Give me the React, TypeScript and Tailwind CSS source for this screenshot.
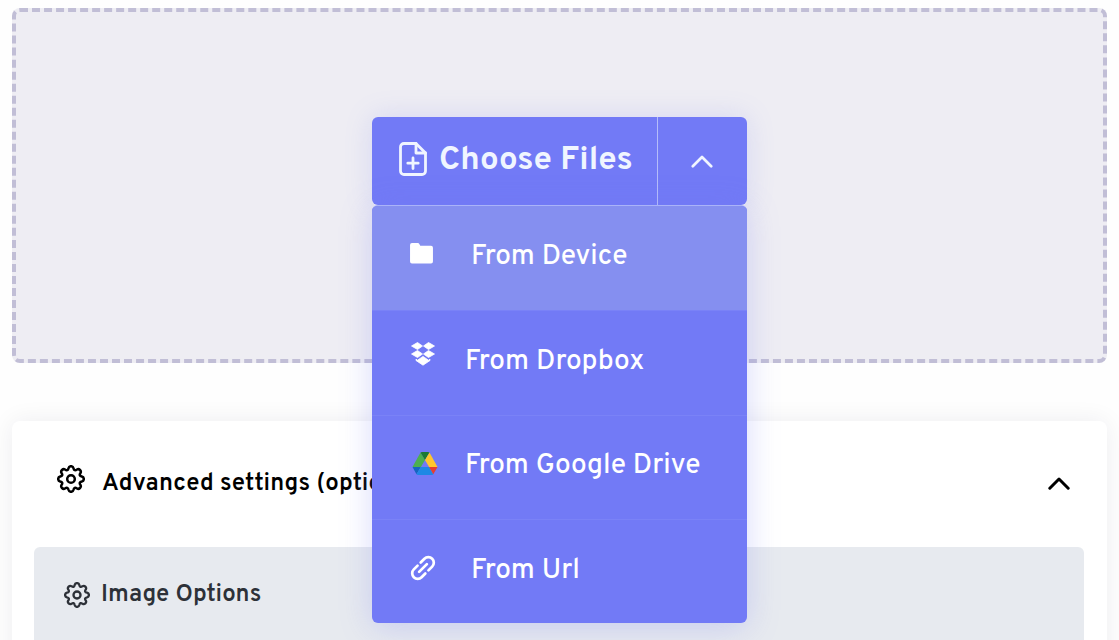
import { useState } from "react";
import { twMerge } from "tailwind-merge";

type IconProps = { className?: string };

const GearIcon: React.FC<IconProps> = ({ className }) => (
  <svg
    viewBox="0 0 28 28"
    className={className}
    fill="none"
    stroke="currentColor"
    strokeWidth="2.5"
    strokeLinejoin="round"
  >
    <path d="M11.5 3.2Q12 1.2 14 1.2T16.5 3.2Q17.2 6.5 20 4.5Q21.6 3.6 23 5T23.5 8Q21.5 10.8 24.8 11.5Q26.8 12 26.8 14T24.8 16.5Q21.5 17.2 23.5 20Q24.4 21.6 23 23T20 23.5Q17.2 21.5 16.5 24.8Q16 26.8 14 26.8T11.5 24.8Q10.8 21.5 8 23.5Q6.4 24.4 5 23T4.5 20Q6.5 17.2 3.2 16.5Q1.2 16 1.2 14T3.2 11.5Q6.5 10.8 4.5 8Q3.6 6.4 5 5T8 4.5Q10.8 6.5 11.5 3.2Z" />
    <circle cx="14" cy="14" r="3.8" />
  </svg>
);

const ChevronIcon: React.FC<IconProps> = ({ className }) => (
  <svg
    viewBox="0 0 22 13"
    className={className}
    fill="none"
    stroke="currentColor"
    strokeLinecap="round"
    strokeLinejoin="round"
  >
    <path d="M1.8 11.2 11 2l9.2 9.2" />
  </svg>
);

const FilePlusIcon: React.FC<IconProps> = ({ className }) => (
  <svg
    viewBox="0 0 28 34"
    className={className}
    fill="none"
    stroke="currentColor"
    strokeWidth="2.8"
    strokeLinecap="round"
    strokeLinejoin="round"
  >
    <path d="M17 1.5H5A3.5 3.5 0 0 0 1.5 5v24A3.5 3.5 0 0 0 5 32.5h18a3.5 3.5 0 0 0 3.5-3.5V11z" />
    <path d="M17 1.5V11h9.5M14 16v10.5M8.8 21.2h10.4" />
  </svg>
);

const FolderIcon: React.FC<IconProps> = ({ className }) => (
  <svg viewBox="0 0 24 22" className={className} fill="currentColor">
    <path d="M2 0h6.2Q9.2 0 9.7 1L10.7 3H22a2 2 0 0 1 2 2v14.5a2 2 0 0 1-2 2H2a2 2 0 0 1-2-2V2a2 2 0 0 1 2-2z" />
  </svg>
);

const DropboxIcon: React.FC<IconProps> = ({ className }) => (
  <svg
    viewBox="0 0 24 24"
    className={className}
    fill="currentColor"
    stroke="currentColor"
    strokeWidth="0.8"
  >
    <path d="M6.5.5 11.5 4 6.5 7.5.5 4zM17.5.5 23.5 4l-6 3.5-5-3.5zM6.5 8.5l5 3.5-5 3.5-6-3.5zM17.5 8.5l6 3.5-6 3.5-5-3.5zM5 17.2l1.5 1 5.5-3.8 5.5 3.8 1.5-1v1.3L12 23.2l-7-4.7z" />
  </svg>
);

const DriveIcon: React.FC<IconProps> = ({ className }) => (
  <svg viewBox="0 0 26 23" className={className}>
    <path fill="#4caf50" d="M8.5.5 13 8 8.9 15H.5z" />
    <path fill="#1b7a33" d="M8.5.5Q9 0 10 0h6q1 0 1.5.5L13 8z" />
    <path fill="#ffc62e" d="M17.5.5 25.5 15h-8.4L13 8z" />
    <path fill="#1565c0" d="M.5 15h8.4L4.5 22.3z" />
    <path fill="#1e88e5" d="M8.900 15h8.200l4.200 7.300Q20.800 23 20 23H6q-1 0-1.500-.7z" />
    <path fill="#e53e30" d="M17.100 15h8.400l-4.200 7.300z" />
  </svg>
);

const LinkIcon: React.FC<IconProps> = ({ className }) => (
  <svg
    viewBox="0 0 32 32"
    className={className}
    fill="none"
    stroke="currentColor"
    strokeWidth="2.7"
    strokeLinecap="round"
  >
    <path d="M13.8 21.5H8.5a5.5 5.5 0 0 1 0-11h5.3M18.2 10.5h5.3a5.5 5.5 0 0 1 0 11h-5.3M10.5 16h11" />
  </svg>
);

const sources = [
  {
    label: "From Device",
    icon: <FolderIcon className="h-[21px] w-[23px]" />,
    iconClass: "pl-[38px] pb-[10px]",
    textClass: "pl-[9px] tracking-[0.05px]",
  },
  {
    label: "From Dropbox",
    icon: <DropboxIcon className="size-6" />,
    iconClass: "pl-[39px] pb-[18px]",
    textClass: "pl-[3px] tracking-[0.1px]",
  },
  {
    label: "From Google Drive",
    icon: <DriveIcon className="h-[23px] w-[26px]" />,
    iconClass: "pl-10 pb-2",
    textClass: "pl-[3px] tracking-[0.05px]",
  },
  {
    label: "From Url",
    icon: <LinkIcon className="size-8 -rotate-45" />,
    iconClass: "pl-[35px] pb-[6px]",
    textClass: "pl-[9px] pb-0 tracking-[0.05px]",
  },
];

const App: React.FC = () => {
  const [open, setOpen] = useState(true);

  return (
    <main className="h-[640px] overflow-hidden bg-[#fefefe] px-3 pt-2 font-['Overpass','Roboto',sans-serif]">
      {/* Drop zone */}
      <section className="flex h-[355px] justify-center rounded-lg border-4 border-dashed border-[#c1bed6] bg-[#eeedf3] pt-[105px]">
        <div className="relative z-10 h-[89px] w-[375px] rounded-md shadow-[0_0_28px_rgba(114,123,246,0.2)]">
          <div className="flex h-[88px] overflow-hidden rounded-md bg-[#727af6] text-[#f0f5ff]">
            <button className="flex w-[286px] items-center border-r border-[#b5bdfa] pl-[27px]">
              <FilePlusIcon className="mt-[-4px] h-[34px] w-7" />
              <span className="ml-3 whitespace-nowrap pt-px text-[33px] leading-none font-bold tracking-[0.08px]">
                Choose Files
              </span>
            </button>
            <button
              className="flex flex-1 items-center justify-center pr-[2px]"
              onClick={() => setOpen(!open)}
            >
              <ChevronIcon className="h-[13px] w-[22px] stroke-[2.7]" />
            </button>
          </div>

          {open && (
            <ul className="absolute left-0 top-[88px] w-[375px] overflow-hidden rounded-md border-t border-[#aab3f8] bg-[#727af6] text-white shadow-[0_4px_32px_rgba(114,123,246,0.28)]">
              {sources.map((source, index) => (
                <li
                  key={source.label}
                  className={twMerge(
                    "flex h-[104.25px] items-center border-t border-[#7a82f7]",
                    index === 0 && "border-t-0 bg-[#858ff0]"
                  )}
                >
                  <span
                    className={twMerge(
                      "flex w-[90px] shrink-0",
                      source.iconClass
                    )}
                  >
                    {source.icon}
                  </span>
                  <span
                    className={twMerge(
                      "whitespace-nowrap pb-[2px] text-[28px] leading-8 font-medium",
                      source.textClass
                    )}
                  >
                    {source.label}
                  </span>
                </li>
              ))}
            </ul>
          )}
        </div>
      </section>

      {/* Advanced settings */}
      <section className="mt-[58px] h-[260px] rounded-lg bg-white pl-[22px] pr-[23px] shadow-[0_0_24px_rgba(30,20,60,0.07)]">
        <div className="flex h-[126px] items-center justify-between pl-[23px] pr-[14px] text-black">
          <div className="flex items-center">
            <GearIcon className="mb-[10px] size-7" />
            <h2 className="ml-[17px] whitespace-nowrap text-[24px] font-semibold tracking-[0.2px]">
              Advanced settings (optional)
            </h2>
          </div>
          <ChevronIcon className="mb-px h-[13px] w-[22px] stroke-[3]" />
        </div>
        <div className="flex h-[200px] items-start rounded-md bg-[#e7eaef] pl-[30px] pt-[30px] text-[#2d3138]">
          <GearIcon className="mt-[5px] size-[26px]" />
          <h3 className="ml-[11px] mt-[2px] text-[24px] leading-8 font-semibold tracking-[0.1px]">
            Image Options
          </h3>
        </div>
      </section>
    </main>
  );
};

export default App;
